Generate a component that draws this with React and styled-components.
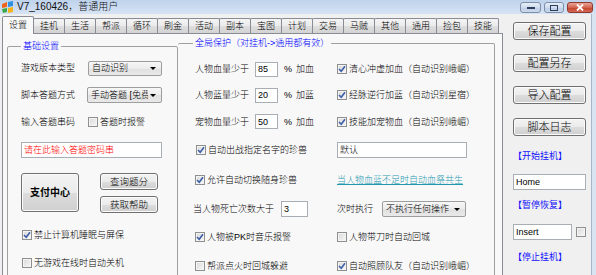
import React from "react";
import styled, { createGlobalStyle } from "styled-components";

const GlobalStyle = createGlobalStyle`
  html, body {
    margin: 0;
    padding: 0;
  }
  body {
    background: #f0f0f0;
    font-family: "Liberation Sans", "Noto Sans CJK SC", sans-serif;
    font-size: 9px;
    font-weight: 300;
    color: #000;
  }
`;

const Window = styled.div`
  width: 596px;
  height: 275px;
  overflow: hidden;
  display: flex;
  flex-direction: column;
  background: #f0f0f0;
`;

const TitleBar = styled.div`
  height: 14px;
  flex: none;
  display: flex;
  align-items: center;
  padding-left: 1px;
  background: linear-gradient(#bfd3ec, #d6e3f3);
`;

const TitleText = styled.span`
  margin-left: 3px;
  font-size: 10px;
  line-height: 12px;
  color: #111;
`;

const Controls = styled.div`
  margin-left: auto;
  align-self: flex-start;
  display: flex;
  gap: 3px;
  margin-top: 2px;
  margin-right: 3px;
`;

const CtrlButton = styled.div`
  box-sizing: border-box;
  width: ${(p) => p.$w}px;
  height: 11px;
  border: 1px solid ${(p) => (p.$close ? "#8e3a2e" : "#7d8fa8")};
  border-radius: 3px;
  background: ${(p) =>
    p.$close
      ? "linear-gradient(#e9a596, #d4644f 50%, #c2412b 51%, #d56a55)"
      : "linear-gradient(#e6eef8, #cfdcee 50%, #bccde5 51%, #cbd9ec)"};
  display: flex;
  align-items: center;
  justify-content: center;
`;

const Body = styled.div`
  flex: 1;
  display: flex;
  padding-left: 2px;
  min-height: 0;
`;

const TabArea = styled.div`
  width: 501px;
  flex: none;
  display: flex;
  flex-direction: column;
`;

const TabStrip = styled.div`
  height: 19px;
  flex: none;
  display: flex;
  align-items: flex-end;
`;

const Tab = styled.div`
  box-sizing: border-box;
  position: relative;
  z-index: ${(p) => (p.$active ? 2 : 1)};
  width: 32px;
  height: ${(p) => (p.$active ? 18 : 15)}px;
  margin-left: ${(p) => (p.$first ? 0 : -1)}px;
  margin-bottom: ${(p) => (p.$active ? -1 : 0)}px;
  border: 1px solid #898c95;
  border-bottom: none;
  border-radius: 2px 2px 0 0;
  background: ${(p) =>
    p.$active
      ? "#f8f8f8"
      : "linear-gradient(#f4f4f4, #ebebeb 50%, #dedede 51%, #d3d3d3)"};
  display: flex;
  align-items: center;
  justify-content: center;
  padding-bottom: ${(p) => (p.$active ? 2 : 0)}px;
  font-size: 9px;
  line-height: 10px;
`;

const TabPanel = styled.div`
  flex: 1;
  position: relative;
  display: flex;
  align-items: flex-start;
  padding-left: 4px;
  border: 1px solid #898c95;
  background: #f8f8f8;
`;

const Group = styled.fieldset`
  box-sizing: border-box;
  margin: ${(p) => p.$top}px 0 0 0;
  width: ${(p) => p.$w}px;
  height: 260px;
  min-width: 0;
  padding: ${(p) => p.$pt}px 0 0 ${(p) => p.$pl}px;
  border: 1px solid #a0a0a0;
  border-left: ${(p) => (p.$noLeft ? "none" : "1px solid #a0a0a0")};
  border-radius: 2px;
`;

const Legend = styled.legend`
  padding: 0 2px;
  font-size: 9px;
  line-height: 10px;
  color: #0000ff;
`;

const Row = styled.div`
  display: flex;
  align-items: center;
  height: ${(p) => p.$h || 16}px;
  margin-top: ${(p) => p.$mt || 0}px;
  margin-left: ${(p) => p.$ml || 0}px;
  white-space: nowrap;
`;

const Label = styled.span`
  display: inline-block;
  width: ${(p) => (p.$w ? `${p.$w}px` : "auto")};
  margin-left: ${(p) => p.$ml || 0}px;
  flex: none;
  font-size: 9px;
  line-height: 10px;
  color: ${(p) => p.$color || "#000"};
`;

const Select = styled.div`
  box-sizing: border-box;
  width: ${(p) => p.$w}px;
  height: ${(p) => p.$h || 15}px;
  margin-left: ${(p) => p.$ml || 0}px;
  flex: none;
  display: flex;
  align-items: center;
  padding-left: 3px;
  border: 1px solid #9d9d9d;
  border-radius: 2px;
  background: linear-gradient(#f7f7f7, #ececec 50%, #e0e0e0 51%, #e9e9e9);
  overflow: hidden;
`;

const SelectText = styled.span`
  flex: 1;
  overflow: hidden;
  white-space: nowrap;
  font-size: 9px;
  line-height: 10px;
`;

const Arrow = styled.span`
  flex: none;
  width: 0;
  height: 0;
  margin: 1px 5px 0 2px;
  border-left: 3px solid transparent;
  border-right: 3px solid transparent;
  border-top: 3px solid #000;
`;

const TextBox = styled.div`
  box-sizing: border-box;
  width: ${(p) => p.$w}px;
  height: ${(p) => p.$h || 15}px;
  margin-top: ${(p) => p.$mt || 0}px;
  margin-left: ${(p) => p.$ml || 0}px;
  flex: none;
  display: flex;
  align-items: center;
  padding-left: 2px;
  border: 1px solid #a9adb4;
  background: #fff;
  font-size: 9px;
  line-height: 10px;
  color: ${(p) => p.$color || "#000"};
  white-space: nowrap;
  overflow: hidden;
`;

const Box = styled.span`
  box-sizing: border-box;
  flex: none;
  width: 10px;
  height: 10px;
  margin-left: ${(p) => p.$ml || 0}px;
  border: 1px solid #8e8f8f;
  background: linear-gradient(135deg, #d9d9d9, #f7f7f7);
  box-shadow: inset 0 0 0 1px #f4f4f4;
  display: flex;
  align-items: center;
  justify-content: center;
`;

const Button = styled.div`
  box-sizing: border-box;
  width: ${(p) => p.$w}px;
  height: ${(p) => p.$h}px;
  flex: none;
  display: flex;
  align-items: center;
  justify-content: center;
  border: 1px solid #707070;
  border-radius: 3px;
  background: linear-gradient(#f3f3f3, #ebebeb 50%, #dddddd 51%, #cfcfcf);
  box-shadow: inset 0 0 0 1px #fbfbfb;
  font-size: ${(p) => p.$fs || 9}px;
  font-weight: ${(p) => (p.$bold ? 700 : 300)};
  line-height: 1;
`;

const ButtonBlock = styled.div`
  display: flex;
  margin-top: 15px;
`;

const ButtonColumn = styled.div`
  display: flex;
  flex-direction: column;
  gap: 6px;
  margin-left: 21px;
`;

const ProtectGrid = styled.div`
  display: grid;
  grid-template-columns: 144px 1fr;
  grid-template-rows: 26px 26px 27px 30px 30px 28px 28px 30px;
  align-items: center;
`;

const Link = styled.span`
  font-size: 9px;
  line-height: 10px;
  color: #1f98b0;
  text-decoration: underline;
  white-space: nowrap;
`;

const SidePanel = styled.div`
  width: 88px;
  flex: none;
  display: flex;
  flex-direction: column;
  padding: 8px 0 0 10px;
  box-sizing: border-box;
`;

const SideButtons = styled.div`
  display: flex;
  flex-direction: column;
  gap: 14px;
`;

const HotLabel = styled.div`
  height: 12px;
  margin-top: ${(p) => p.$mt}px;
  display: flex;
  align-items: center;
  font-size: 9px;
  font-weight: 400;
  color: #1010ff;
  white-space: nowrap;
`;

const Frame = styled.div`
  width: 5px;
  flex: none;
  border-left: 1px solid #a7b5c6;
  background: #d9e4f2;
`;

const tabs = [
  "设置", "挂机", "生活", "帮派", "循环", "刷金", "活动", "副本",
  "宝图", "计划", "交易", "马贼", "其他", "通用", "捡包", "技能",
];

const AppIcon = () => (
  <svg width="13" height="12" viewBox="0 0 13 12">
    <path d="M1 3 L6 1 L6 6 L1 7 Z" fill="#f0641e" />
    <path d="M7 1 L12 0 L12 5 L7 6 Z" fill="#2f8fe0" />
    <path d="M1 8 L6 7 L6 11 L2 12 Z" fill="#3aa84a" />
    <path d="M7 7 L12 6 L12 11 L7 12 Z" fill="#f5b21a" />
  </svg>
);

const Check = ({ checked, ml, children }) => (
  <Row $ml={ml}>
    <Box>
      {checked && (
        <svg width="8" height="8" viewBox="0 0 8 8">
          <path d="M1 4 L3.2 6.2 L7 1.2" fill="none" stroke="#3d5ea8" strokeWidth="1.6" />
        </svg>
      )}
    </Box>
    <Label $ml={2}>{children}</Label>
  </Row>
);

const Combo = ({ w, h, ml, children }) => (
  <Select $w={w} $h={h} $ml={ml}>
    <SelectText>{children}</SelectText>
    <Arrow />
  </Select>
);

const BasicGroup = () => (
  <Group $top={7} $w={171} $pt={9} $pl={13}>
    <Legend>基础设置</Legend>
    <Row>
      <Label $w={67}>游戏版本类型</Label>
      <Combo w={74}>自动识别</Combo>
    </Row>
    <Row $mt={11}>
      <Label $w={66}>脚本答题方式</Label>
      <Combo w={75} h={16}>手动答题 [免费</Combo>
    </Row>
    <Row $mt={11}>
      <Label $w={67}>输入答题串码</Label>
      <Box />
      <Label $ml={2}>答题时报警</Label>
    </Row>
    <TextBox $w={141} $h={16} $mt={12} $color="#ff0000">
      请在此输入答题密码串
    </TextBox>
    <ButtonBlock>
      <Button $w={58} $h={39} $fs={10} $bold>
        支付中心
      </Button>
      <ButtonColumn>
        <Button $w={58} $h={17} $fs={9.5}>查询题分</Button>
        <Button $w={58} $h={17} $fs={9.5}>获取帮助</Button>
      </ButtonColumn>
    </ButtonBlock>
    <Row $mt={14} $ml={1}>
      <Check checked>禁止计算机睡眠与屏保</Check>
    </Row>
    <Row $mt={12} $ml={1}>
      <Check>无游戏在线时自动关机</Check>
    </Row>
  </Group>
);

const Threshold = ({ label, value, action }) => (
  <Row>
    <Label $w={60} $ml={2}>{label}</Label>
    <TextBox $w={23} $h={15}>{value}</TextBox>
    <Label $ml={6}>%</Label>
    <Label $ml={4}>{action}</Label>
  </Row>
);

const ProtectGroup = () => (
  <Group $top={4} $w={317} $pt={8} $pl={15} $noLeft>
    <Legend>全局保护（对挂机-&gt;通用都有效）</Legend>
    <ProtectGrid>
      <Threshold label="人物血量少于" value="85" action="加血" />
      <Check checked ml={0}>清心冲虚加血（自动识别峨嵋）</Check>

      <Threshold label="人物蓝量少于" value="20" action="加蓝" />
      <Check checked>经脉逆行加蓝（自动识别星宿）</Check>

      <Threshold label="宠物血量少于" value="50" action="加血" />
      <Check checked>技能加宠物血（自动识别峨嵋）</Check>

      <Check checked ml={3}>自动出战指定名字的珍兽</Check>
      <TextBox $w={130} $h={16}>默认</TextBox>

      <Check checked ml={2}>允许自动切换随身珍兽</Check>
      <Link>当人物血蓝不足时自动血祭共生</Link>

      <Row>
        <Label>当人物死亡次数大于</Label>
        <TextBox $w={27} $h={16} $ml={7}>3</TextBox>
      </Row>
      <Row>
        <Label $w={45}>次时执行</Label>
        <Combo w={84} h={16}>不执行任何操作</Combo>
      </Row>

      <Check checked ml={2}>人物被PK时音乐报警</Check>
      <Check>人物带刀时自动回城</Check>

      <Check ml={2}>帮派点火时回城躲避</Check>
      <Check checked>自动照顾队友（自动识别峨嵋）</Check>
    </ProtectGrid>
  </Group>
);

const Side = () => (
  <SidePanel>
    <SideButtons>
      <Button $w={73} $h={18} $fs={11}>保存配置</Button>
      <Button $w={73} $h={18} $fs={11}>配置另存</Button>
      <Button $w={73} $h={18} $fs={11}>导入配置</Button>
      <Button $w={73} $h={18} $fs={11}>脚本日志</Button>
    </SideButtons>
    <HotLabel $mt={13}>【开始挂机】</HotLabel>
    <TextBox $w={73} $h={16} $mt={13}>Home</TextBox>
    <HotLabel $mt={8}>【暂停恢复】</HotLabel>
    <Row $mt={14}>
      <TextBox $w={59} $h={16}>Insert</TextBox>
      <Box $ml={4} />
    </Row>
    <HotLabel $mt={10}>【停止挂机】</HotLabel>
  </SidePanel>
);

export default function App() {
  return (
    <>
      <GlobalStyle />
      <Window>
        <TitleBar>
          <AppIcon />
          <TitleText>V7_160426，普通用户</TitleText>
          <Controls>
            <CtrlButton $w={21}>
              <svg width="8" height="4" viewBox="0 0 8 4">
                <rect x="0" y="1" width="8" height="2" fill="#2c3e5a" />
              </svg>
            </CtrlButton>
            <CtrlButton $w={20}>
              <svg width="8" height="6" viewBox="0 0 8 6">
                <rect x="0.5" y="0.5" width="7" height="5" fill="none" stroke="#2c3e5a" />
              </svg>
            </CtrlButton>
            <CtrlButton $w={26} $close>
              <svg width="8" height="7" viewBox="0 0 8 7">
                <path d="M1 0.5 L7 6.5 M7 0.5 L1 6.5" stroke="#fff" strokeWidth="1.8" />
              </svg>
            </CtrlButton>
          </Controls>
        </TitleBar>
        <Body>
          <TabArea>
            <TabStrip>
              {tabs.map((t, i) => (
                <Tab key={t} $first={i === 0} $active={i === 0}>
                  {t}
                </Tab>
              ))}
            </TabStrip>
            <TabPanel>
              <BasicGroup />
              <ProtectGroup />
            </TabPanel>
          </TabArea>
          <Side />
          <Frame />
        </Body>
      </Window>
    </>
  );
}
